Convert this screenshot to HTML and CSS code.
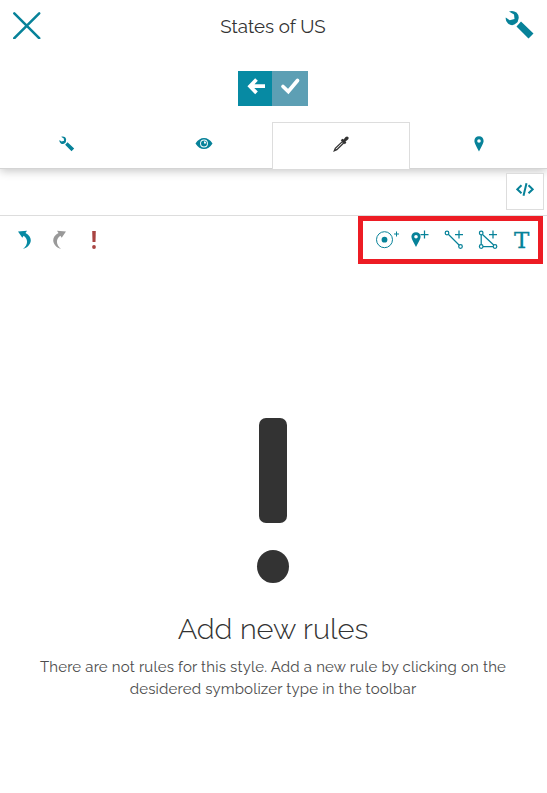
FILE: index.html
```html
<!DOCTYPE html>
<html lang="en">
<head>
<meta charset="utf-8">
<title>States of US</title>
<link rel="stylesheet" href="styles.css">
</head>
<body>
<header class="header">
  <div class="title-row">
    <svg class="icon" width="29" height="29" viewBox="12 11 29 29"><path class="line close" d="M14.300 14.300L39.200 39.200M39.200 14.300L14.300 39.200"/></svg>
    <h1 class="title">States of US</h1>
    <svg class="icon" width="30" height="30" viewBox="505 10 30 30"><use href="#wrench" x="505" y="10" width="30" height="30"/></svg>
  </div>
  <div class="actions">
    <button class="action back" aria-label="Back"><svg class="icon" width="34" height="35" viewBox="0 0 34 35"><path d="M27 15.200H14M18.500 8.500L12 15.200L18.500 21.900"/></svg></button>
    <button class="action save" aria-label="Save"><svg class="icon" width="36" height="35" viewBox="0 0 36 35"><path d="M11 15.500L16.300 20.500L25.500 9.500"/></svg></button>
  </div>
  <nav class="tabs">
    <button class="tab" aria-label="Settings"><svg class="icon" width="16" height="16"><use href="#wrench" width="16" height="16"/></svg></button>
    <button class="tab" aria-label="Visibility"><svg class="icon" width="18" height="16" viewBox="0 0 18 16"><path class="fill" fill-rule="evenodd" d="M.5 7.500Q4 2 9 2T17.500 7.500Q14 13 9 13T.5 7.500ZM9 3.600A3.900 3.900 0 1 0 9 11.400A3.900 3.900 0 1 0 9 3.600Z"/><circle class="fill" cx="9" cy="7.500" r="3"/><path d="M9 7.500V5.200A2.300 2.300 0 0 1 11.300 7.500Z" fill="#fff"/></svg></button>
    <button class="tab active" aria-label="Style"><svg class="icon" width="16" height="16" viewBox="0 0 16 16"><path d="M7.700 4.300L9.500 2.700L10.600 3.600L12.600 1.100Q14 -.1 15.200 1Q16.200 2.200 15 3.400L12.500 5.500L13.400 6.600L11.900 8.200Z" fill="#333"/><path d="M9.300 5.600L2.300 12.300L1.300 14.700L3.800 13.700L10.700 7Z" fill="#fff" stroke="#333" stroke-width="1.300"/></svg></button>
    <button class="tab" aria-label="Location"><svg class="icon" width="10" height="16" viewBox="0 0 10 16"><use href="#pin" width="10" height="16"/></svg></button>
  </nav>
</header>
<section class="code-row">
  <button class="code" aria-label="Code editor"><svg class="icon" width="18" height="14" viewBox="0 0 18 14"><path class="line code-line" d="M5.500 2.300L1.300 6.300L5.500 10.300M12.500 2.300L16.700 6.300L12.500 10.300M10.500 .2L7.500 12.800"/></svg></button>
</section>
<section class="toolbar">
  <div class="history">
    <svg class="icon" width="14" height="20" viewBox="0 0 14 20"><use href="#turn"/></svg>
    <svg class="icon redo" width="14" height="20" viewBox="0 0 14 20"><use href="#turn"/></svg>
    <svg class="icon warning" width="6" height="20" viewBox="0 0 6 20"><path d="M1.200 1H4.800L4.500 12H1.500Z"/><circle cx="3" cy="17" r="1.900"/></svg>
  </div>
  <div class="symbolizers">
    <svg class="icon" width="151" height="20" viewBox="363 230 151 20">
      <g class="line"><circle cx="384.500" cy="239.700" r="8"/><path d="M394 234H399M396.500 231.500V236.500"/></g>
      <circle class="fill" cx="384.500" cy="239.700" r="2.900"/>
      <use href="#pin" x="411" y="232" width="10" height="15.500"/>
      <g class="line bold"><path d="M420.500 234.500H428.500M424.500 230.500V238.500M455 234.500H463M459 230.500V238.500M489 234.500H497M493 230.500V238.500"/><path d="M448.300 234.300L459.300 245.300M481.200 235V244.500M483 246.500H493M482.500 234.500L493.700 245"/><circle cx="447" cy="233" r="1.800"/><circle cx="460.500" cy="246.500" r="1.800"/><circle cx="481.200" cy="233" r="1.800"/><circle cx="481.200" cy="246.500" r="1.800"/><circle cx="495" cy="246.500" r="1.800"/></g>
    </svg>
    <span class="text-symbol">T</span>
  </div>
</section>
<main class="empty">
  <div class="mark"><span class="bar"></span><span class="dot"></span></div>
  <h2 class="heading">Add new rules</h2>
  <p class="message">There are not rules for this style. Add a new rule by clicking on the<br>desidered symbolizer type in the toolbar</p>
</main>
<svg class="defs" width="0" height="0">
  <symbol id="wrench" viewBox="0 0 30 30"><path class="fill" d="M4 1.500Q8 0 11.500 2.500Q15 6 13 10.500Q13 12 11.500 13Q7.500 17 3 13.500Q.2 11 .8 7.500L4.700 10.200L9.500 9L9 4.500ZM16 11.500L28.500 23.500L23.500 28.500L11.500 16.500Z"/></symbol>
  <symbol id="pin" viewBox="0 0 10 16" preserveAspectRatio="none"><path class="fill" fill-rule="evenodd" d="M5 .3C2.200 .3 .4 2.200 .4 5C.4 7.500 3 11.200 5 15.500C7 11.200 9.600 7.500 9.600 5C9.600 2.200 7.800 .3 5 .3ZM5 3.200A1.800 1.800 0 1 0 5 6.800A1.800 1.800 0 1 0 5 3.200Z"/></symbol>
  <symbol id="turn"><path d="M0 1.500L9 .7L7.500 2.900C15.200 6.500 14.600 16 5 19C10.300 14.500 10.300 9 5.600 5.800L4.300 7.800Z"/></symbol>
</svg>
</body>
</html>
```
FILE: styles.css
```css
* { box-sizing: border-box; }
body { margin: 0; background: #fff; color: #333; font-family: Raleway, Lato, sans-serif; }
button { padding: 0; border: 0; background: none; font: inherit; }
.icon { display: block; flex: none; fill: #078aa3; }
.defs { display: block; }
.fill { fill: #078299; }
.line { fill: none; stroke: #078299; stroke-width: 1; }
.line.bold { stroke-width: 1.25; }
.line.close { stroke-width: 2.5; stroke-linecap: round; }
.line.code-line { stroke-width: 2; }

.header { height: 169px; border-bottom: 1px solid #d4d4d4; box-shadow: 0 2px 9px rgba(0, 0, 0, .23); }
.title-row { display: flex; align-items: flex-start; justify-content: space-between; height: 71px; padding: 10px 12px; }
.title { margin: 4px 0 0; font-size: 18.7px; line-height: 25px; font-weight: 400; }
.actions { display: flex; justify-content: center; height: 51px; padding-right: 1px; }
.action { height: 35px; }
.action path { fill: none; stroke: #fff; stroke-width: 3.7; }
.back { background: #078aa3; }
.save { background: #5d9fb4; }
.save path { stroke-linecap: round; }
.tabs { display: grid; grid-template-columns: 135px 137px 138px 137px; height: 47px; }
.tab { display: flex; justify-content: center; padding-top: 14px; }
.tab:first-child { padding-right: 2px; }
.active { padding-top: 13px; border: 1px solid #ddd; border-bottom: 0; background: #fff; }

.code-row { display: flex; justify-content: flex-end; height: 47px; padding: 4px 3px 0; border-bottom: 1px solid #ddd; }
.code { display: flex; justify-content: center; width: 38px; height: 37px; padding-top: 9px; border: 1px solid #ddd; background: #fff; }

.toolbar { display: flex; justify-content: space-between; height: 48px; padding-right: 4px; }
.history { display: flex; gap: 20px; padding: 14px 0 0 18px; }
.redo { fill: #999; transform: scaleX(-1); }
.warning { margin-left: 5px; fill: #a94442; }
.symbolizers { display: flex; width: 185px; padding-top: 9px; border: 5px solid #ed1c24; }
.text-symbol { width: 16px; color: #078299; font: 400 23px/20px "DejaVu Serif", serif; -webkit-text-stroke: .3px #078299; }

.empty { padding: 154px 1px 0 0; text-align: center; }
.mark { display: flex; flex-direction: column; align-items: center; gap: 27px; }
.bar { width: 28px; height: 105px; border-radius: 7px; background: #333; }
.dot { width: 32px; height: 33px; border-radius: 50%; background: #333; }
.heading { margin: 27px 0 0; font-size: 29px; line-height: 38px; font-weight: 300; }
.message { margin: 8px 0 0; color: #4c4c4c; font-size: 15px; line-height: 22px; letter-spacing: .17px; white-space: nowrap; }
```
